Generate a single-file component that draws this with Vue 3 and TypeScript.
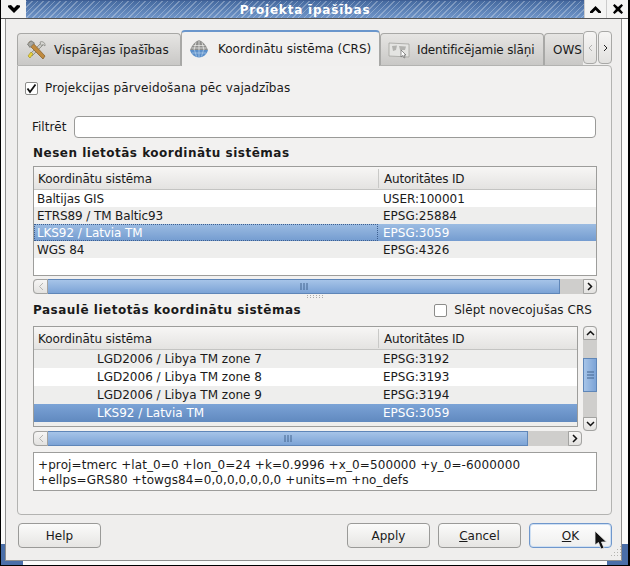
<template>
  <div class="window">
    <!-- window manager title bar -->
    <div class="titlebar">
      <div class="wm-btn menu-btn">
        <svg width="14" height="10" viewBox="0 0 14 10"><path d="M1 1.5 L4 1 L7 4 L10 1 L13 1.5 L13 3 L7 9 L1 3 Z" fill="#000" /></svg>
      </div>
      <div class="title-band"><span class="title-text">Projekta īpašības</span></div>
      <div class="wm-btn">
        <svg width="13" height="9" viewBox="0 0 13 9"><path d="M1 6.5 L6.5 1 L12 6.5 L12 8 L9.5 8 L6.5 5 L3.5 8 L1 8 Z" fill="#000" /></svg>
      </div>
      <div class="wm-btn">
        <svg width="12" height="12" viewBox="0 0 12 12"><path d="M1 2.5 L2.5 1 L6 4 L9.5 1 L11 2.5 L8 6 L11 9.5 L9.5 11 L6 8 L2.5 11 L1 9.5 L4 6 Z" fill="#000" /></svg>
      </div>
    </div>

    <div class="client">
      <div class="tabbar">
        <div class="tab tab-general">
          <svg width="22" height="22" viewBox="0 0 22 22">
            <path d="M17 3 L19 5 L7 17 L5 15 Z" fill="#c9c9c4" stroke="#85857f" stroke-width=".8" />
            <path d="M15 3 a3.5 3.5 0 0 1 5 4 l-2-1.500 -1.500 1 -1-1.500 Z" fill="#d8d8d4" stroke="#85857f" stroke-width=".7" />
            <path d="M4 3 L7 3 L20 17 L18 20 L5 7 Z" fill="#c08a3e" stroke="#7f5a26" stroke-width=".7" />
            <path d="M2.500 5 L6 1.800 L9.500 4 L5 8.500 Z" fill="#a8a8a2" stroke="#6f6f6a" stroke-width=".8" />
            <path d="M8 15 L5 19 L3 17 L6 13 Z" fill="#e9d23f" stroke="#9b8a1a" stroke-width=".6" />
          </svg>
          <span class="tab-label">Vispārējas īpašības</span>
        </div>
        <div class="tab tab-active">
          <svg width="20" height="20" viewBox="0 0 20 20">
            <path d="M1 11 C3 6 6 2.500 10 1 C14 2.500 17 6 19 11 Z" fill="#8e8e8c" />
            <path d="M1 11 H19 C18 15.500 14 18.500 10 18.500 C6 18.500 2 15.500 1 11 Z" fill="#5b8fc9" />
            <path d="M7 3.500 L5 11 M10 1.500 V11 M13 3.500 L15 11 M4.500 6.500 H15.500 M2.500 9 H17.500" stroke="#f0f0ee" stroke-width=".7" fill="none" />
            <path d="M5.500 11 L7.500 17.500 M10 11 V18.500 M14.500 11 L12.500 17.500 M3 14 H17" stroke="#b5cfea" stroke-width=".7" fill="none" />
          </svg>
          <span class="tab-label">Koordinātu sistēma (CRS)</span>
        </div>
        <div class="tab tab-layers">
          <svg width="22" height="18" viewBox="0 0 22 18">
            <path d="M1 2 L21 3 V16 L1 15 Z" fill="#e4e4e2" stroke="#a3a3a0" stroke-width=".8" />
            <path d="M4 5 L9 4.500 L8 9 L5 10 Z M11 5 L18 5.500 L17 9 L12 9 Z" fill="#b2b2af" />
            <path d="M13 9 L13 16 L14.800 14.500 L16 17 L17 16.500 L16 14 L18 14 Z" fill="#fff" stroke="#666" stroke-width=".7" />
          </svg>
          <span class="tab-label ident-label">Identificējamie slāņi</span>
        </div>
        <div class="tab tab-ows"><span class="tab-label">OWS</span></div>
        <div class="tab-scroll">
          <div class="tab-arrow">
            <svg width="5" height="8" viewBox="0 0 5 8"><path d="M4 1 L1 4 L4 7" fill="none" stroke="#b0b0ae" stroke-width="1" /></svg>
          </div>
          <div class="tab-arrow">
            <svg width="5" height="8" viewBox="0 0 5 8"><path d="M1 1 L4 4 L1 7" fill="none" stroke="#222" stroke-width="1" /></svg>
          </div>
        </div>
      </div>

      <div class="panel">
        <label class="check-row">
          <span class="checkbox">
            <svg width="11" height="11" viewBox="0 0 11 11"><path d="M1.500 5.500 L4 9 L9.500 1.500" fill="none" stroke="#111" stroke-width="1.800" /></svg>
          </span>
          <span class="wide-text">Projekcijas pārveidošana pēc vajadzības</span>
        </label>

        <div class="filter-row">
          <span class="filter-label">Filtrēt</span>
          <div class="line-edit"></div>
        </div>

        <div class="heading first-heading">Nesen lietotās koordinātu sistēmas</div>

        <div class="table recent-table">
          <div class="thead">
            <div class="th col-name">Koordinātu sistēma</div>
            <div class="th col-id">Autoritātes ID</div>
          </div>
          <div
            v-for="(row, i) in recent"
            :key="row.id"
            class="tr tr-recent"
            :class="{ alt: i % 2 === 1, selected: row.selected }"
          >
            <div class="td col-name" :class="{ focused: row.selected }">{{ row.name }}</div>
            <div class="td col-id">{{ row.id }}</div>
          </div>
        </div>

        <div class="hscroll recent-scroll">
          <div class="sb-btn left-btn">
            <svg width="6" height="9" viewBox="0 0 6 9"><path d="M5 1 L1.500 4.500 L5 8" fill="none" stroke="#b4b4b2" stroke-width="1" /></svg>
          </div>
          <div class="sb-thumb" style="width: 512px">
            <svg width="8" height="7" viewBox="0 0 8 7"><path d="M1 0 V7 M4 0 V7 M7 0 V7" stroke="#43648f" stroke-width="1" /></svg>
          </div>
          <div class="sb-trough"></div>
          <div class="sb-btn right-btn">
            <svg width="6" height="9" viewBox="0 0 6 9"><path d="M1 1 L4.500 4.500 L1 8" fill="none" stroke="#111" stroke-width="1.500" /></svg>
          </div>
        </div>

        <div class="splitter"></div>

        <div class="heading-row">
          <div class="heading">Pasaulē lietotās koordinātu sistēmas</div>
          <label class="check-row hide-row">
            <span class="checkbox"></span>
            <span class="hide-text">Slēpt novecojušas CRS</span>
          </label>
        </div>

        <div class="world-area">
          <div class="table world-table">
            <div class="thead">
              <div class="th col-name">Koordinātu sistēma</div>
              <div class="th col-id">Autoritātes ID</div>
            </div>
            <div
              v-for="(row, i) in world"
              :key="row.id"
              class="tr tr-world"
              :class="{ alt: i % 2 === 0, selected: row.selected }"
            >
              <div class="td col-name indented">{{ row.name }}</div>
              <div class="td col-id">{{ row.id }}</div>
            </div>
          </div>
          <div class="vscroll">
            <div class="vs-btn vs-up"><svg width="9" height="6" viewBox="0 0 9 6"><path d="M1 5 L4.500 1.500 L8 5" fill="none" stroke="#111" stroke-width="1.500" /></svg></div>
            <div class="vs-trough">
              <div class="vs-thumb">
                <svg width="7" height="8" viewBox="0 0 7 8"><path d="M0 1 H7 M0 4 H7 M0 7 H7" stroke="#43648f" stroke-width="1" /></svg>
              </div>
            </div>
            <div class="vs-btn vs-down"><svg width="9" height="6" viewBox="0 0 9 6"><path d="M1 1 L4.500 4.500 L8 1" fill="none" stroke="#111" stroke-width="1.500" /></svg></div>
          </div>
        </div>

        <div class="hscroll world-scroll">
          <div class="sb-btn left-btn">
            <svg width="6" height="9" viewBox="0 0 6 9"><path d="M5 1 L1.500 4.500 L5 8" fill="none" stroke="#b4b4b2" stroke-width="1" /></svg>
          </div>
          <div class="sb-thumb" style="width: 480px">
            <svg width="8" height="7" viewBox="0 0 8 7"><path d="M1 0 V7 M4 0 V7 M7 0 V7" stroke="#43648f" stroke-width="1" /></svg>
          </div>
          <div class="sb-trough"></div>
          <div class="sb-btn right-btn">
            <svg width="6" height="9" viewBox="0 0 6 9"><path d="M1 1 L4.500 4.500 L1 8" fill="none" stroke="#111" stroke-width="1.500" /></svg>
          </div>
        </div>

        <div class="proj-box">
          +proj=tmerc +lat_0=0 +lon_0=24 +k=0.9996 +x_0=500000 +y_0=-6000000<br />
          +ellps=GRS80 +towgs84=0,0,0,0,0,0,0 +units=m +no_defs
        </div>
      </div>

      <div class="buttons">
        <button class="btn">Help</button>
        <span class="spacer"></span>
        <button class="btn">Apply</button>
        <button class="btn"><u>C</u>ancel</button>
        <button class="btn btn-default"><u>O</u>K</button>
      </div>
    </div>

    <!-- overlays: corner marks, resize grip, mouse pointer -->
    <div class="corner corner-left"></div>
    <div class="corner corner-right"></div>
    <svg class="size-grip" width="12" height="12" viewBox="0 0 12 12">
      <g fill="#b4b4b0">
        <rect x="10" y="1" width="1" height="1" /><rect x="7" y="4" width="1" height="1" /><rect x="10" y="4" width="1" height="1" />
        <rect x="4" y="7" width="1" height="1" /><rect x="7" y="7" width="1" height="1" /><rect x="10" y="7" width="1" height="1" />
        <rect x="1" y="10" width="1" height="1" /><rect x="4" y="10" width="1" height="1" /><rect x="7" y="10" width="1" height="1" /><rect x="10" y="10" width="1" height="1" />
      </g>
    </svg>
    <svg class="pointer" width="14" height="21" viewBox="0 0 14 21">
      <path d="M1 1 L1 15 L4.500 12.500 L7 19 L10 18 L7.500 12 L12.500 12 Z" fill="#111" stroke="#eee" stroke-width=".8" />
    </svg>
  </div>
</template>

<script setup lang="ts">
interface CrsRow {
  name: string
  id: string
  selected?: boolean
}

const recent: CrsRow[] = [
  { name: 'Baltijas GIS', id: 'USER:100001' },
  { name: 'ETRS89 / TM Baltic93', id: 'EPSG:25884' },
  { name: 'LKS92 / Latvia TM', id: 'EPSG:3059', selected: true },
  { name: 'WGS 84', id: 'EPSG:4326' }
]

const world: CrsRow[] = [
  { name: 'LGD2006 / Libya TM zone 7', id: 'EPSG:3192' },
  { name: 'LGD2006 / Libya TM zone 8', id: 'EPSG:3193' },
  { name: 'LGD2006 / Libya TM zone 9', id: 'EPSG:3194' },
  { name: 'LKS92 / Latvia TM', id: 'EPSG:3059', selected: true },
  { name: 'LKS94 / Lithuania TM', id: 'EPSG:3346' }
]
</script>

<style>
html,
body {
  margin: 0;
  background: #fff;
}
</style>

<style scoped>
.window {
  position: relative;
  width: 630px;
  height: 566px;
  box-sizing: border-box;
  overflow: hidden;
  display: flex;
  flex-direction: column;
  background: #fbfbfa;
  border-left: 1px solid #000;
  border-right: 2px solid #000;
  border-bottom: 1px solid #000;
  font-family: "DejaVu Sans", sans-serif;
  font-size: 12px;
  color: #1a1a1a;
}

.titlebar {
  height: 19px;
  flex: none;
  display: flex;
  border-bottom: 1px solid #555;
  box-sizing: border-box;
}

.wm-btn {
  width: 21px;
  display: flex;
  align-items: center;
  justify-content: center;
  background: #f4f4f3;
  border-left: 1px solid #ccc;
}

.menu-btn {
  width: 25px;
  border-left: none;
}

.title-band {
  flex: 1;
  display: flex;
  align-items: center;
  justify-content: center;
  border-top: 1px solid #3f5f95;
  background:
    repeating-linear-gradient(135deg, rgba(255, 255, 255, 0.28) 0 1px, transparent 1px 4px),
    linear-gradient(#45699f, #7096c9);
}

.title-text {
  color: #fff;
  font-weight: bold;
  letter-spacing: 0.8px;
  line-height: 16px;
}

.client {
  flex: 1;
  min-height: 0;
  display: flex;
  flex-direction: column;
  margin: 0 6px 4px 4px;
  padding: 11px 9px 0 11px;
  background: #efeeed;
  border-left: 1px solid #8f8f8f;
  border-right: 1px solid #8f8f8f;
  border-bottom: 1px solid #8f8f8f;
}

.tabbar {
  height: 36px;
  flex: none;
  display: flex;
  align-items: flex-end;
  position: relative;
  z-index: 1;
  overflow: hidden;
}

.tab {
  box-sizing: border-box;
  height: 32px;
  margin-bottom: 1px;
  display: flex;
  align-items: center;
  flex: none;
  background: linear-gradient(#e6e5e3, #c9c8c6);
  border: 1px solid #a8a8a6;
  border-bottom: none;
  border-radius: 4px 4px 0 0;
  white-space: nowrap;
  overflow: hidden;
}

.tab-general {
  width: 164px;
  padding-left: 7px;
  gap: 7px;
}

.tab-active {
  width: 199px;
  height: 36px;
  margin-bottom: 0;
  padding-left: 7px;
  gap: 9px;
  background: #f1f0ef;
  border-color: #a8a8a6;
  border-top: 2px solid #6a96cc;
}

.tab-layers {
  width: 164px;
  padding-left: 7px;
  gap: 7px;
}

.ident-label {
  letter-spacing: -0.15px;
}

.tab-ows {
  width: 60px;
  padding-left: 8px;
}

.tab-scroll {
  position: absolute;
  right: 0;
  top: 1px;
  height: 34px;
  display: flex;
  gap: 1px;
  background: #efeeed;
}

.tab-arrow {
  box-sizing: border-box;
  width: 14px;
  height: 33px;
  display: flex;
  align-items: center;
  justify-content: center;
  background: linear-gradient(#f6f5f4, #e2e1df);
  border: 1px solid #a8a8a6;
  border-radius: 4px;
}

.panel {
  box-sizing: border-box;
  height: 450px;
  flex: none;
  margin-top: -1px;
  padding: 15px 14px 0 15px;
  background: #f2f1f0;
  border: 1px solid #b3b3b1;
  border-radius: 0 4px 4px 4px;
}

.check-row {
  display: flex;
  align-items: center;
  gap: 7px;
  height: 14px;
  margin-left: -8px;
}

.wide-text {
  letter-spacing: 0.1px;
}

.hide-text {
  letter-spacing: 0.05px;
}

.checkbox {
  box-sizing: border-box;
  width: 13px;
  height: 13px;
  flex: none;
  display: flex;
  align-items: center;
  justify-content: center;
  background: #fff;
  border: 1px solid #8c8c8a;
  border-radius: 2px;
}

.filter-row {
  display: flex;
  align-items: center;
  margin-top: 21px;
  height: 22px;
}

.filter-label {
  width: 42px;
  margin-left: -1px;
}

.line-edit {
  flex: 1;
  height: 22px;
  margin-right: 1px;
  box-sizing: border-box;
  background: #fff;
  border: 1px solid #9a9a98;
  border-radius: 4px;
}

.heading {
  font-weight: bold;
  letter-spacing: 0.5px;
  line-height: 16px;
}

.first-heading {
  margin-top: 7px;
}

.table {
  box-sizing: border-box;
  background: #fff;
  border: 1px solid #9d9d9b;
  overflow: hidden;
}

.recent-table {
  height: 110px;
  margin-top: 5px;
}

.thead {
  height: 23px;
  display: flex;
  align-items: center;
  background: linear-gradient(#f7f6f5, #e4e3e1);
  border-bottom: 1px solid #c4c4c2;
  box-sizing: border-box;
}

.th {
  padding-top: 2px;
  line-height: 17px;
  letter-spacing: -0.1px;
}

.th.col-id {
  border-left: 1px solid #c9c9c7;
  padding-left: 5px;
  letter-spacing: -0.2px;
}

.th.col-name {
  padding-left: 4px;
}

.col-name {
  width: 344px;
  flex: none;
  box-sizing: border-box;
}

.tr {
  display: flex;
  align-items: center;
}

.tr-recent {
  height: 17px;
}

.tr-recent .col-name {
  letter-spacing: -0.1px;
}

.tr-world {
  height: 18px;
}

.tr-world:last-child .td {
  padding-top: 2px;
}

.alt {
  background: #eeeeed;
}

.selected {
  background: linear-gradient(#9cbce2, #749cd0);
  color: #fff;
}

.world-table .selected {
  background: linear-gradient(#7ba3d6, #6089bf);
}

.td {
  height: 100%;
  padding-top: 1px;
  line-height: 17px;
  box-sizing: border-box;
}

.td.col-name {
  padding-left: 3px;
}

.td.col-id {
  padding-left: 5px;
}

.td.focused {
  border: 1px dotted #3d5f8f;
  padding-top: 0;
  padding-left: 2px;
  line-height: 17px;
}

.td.indented {
  padding-left: 63px;
}

.hscroll {
  height: 15px;
  box-sizing: border-box;
  display: flex;
  background: #cfcecc;
  border-radius: 4px;
}

.recent-scroll {
  margin-top: 3px;
}

.world-scroll {
  width: 549px;
  margin-top: 0;
}

.sb-btn {
  flex: none;
  box-sizing: border-box;
  display: flex;
  align-items: center;
  justify-content: center;
  background: linear-gradient(#f6f5f4, #e3e2e0);
  border: 1px solid #a3a3a1;
}

.left-btn {
  width: 15px;
  border-radius: 4px 0 0 4px;
}

.right-btn {
  width: 14px;
  border-radius: 0 4px 4px 0;
}

.sb-thumb {
  flex: none;
  display: flex;
  align-items: center;
  justify-content: center;
  box-sizing: border-box;
  background: linear-gradient(#a6c4e8, #7ca3d6);
  border: 1px solid #5f86b8;
  border-width: 1px 1px 1px 0;
}

.sb-trough {
  flex: 1;
}

.splitter {
  width: 16px;
  height: 3px;
  margin: 1px auto 0;
  background-image: radial-gradient(circle at 0.5px 0.5px, #aaa 0.6px, transparent 0.7px);
  background-size: 3px 2px;
}

.heading-row {
  display: flex;
  align-items: center;
  justify-content: space-between;
  margin-top: 4px;
  height: 16px;
}

.hide-row {
  margin-left: 0;
  margin-right: 5px;
}

.world-area {
  display: flex;
  gap: 5px;
  margin-top: 8px;
  height: 105px;
}

.world-table {
  width: 545px;
  height: 101px;
  flex: none;
}

.vscroll {
  width: 14px;
  display: flex;
  flex-direction: column;
  background: #cfcecc;
  border-radius: 4px;
}

.vs-btn {
  height: 14px;
  flex: none;
  box-sizing: border-box;
  display: flex;
  align-items: center;
  justify-content: center;
  background: linear-gradient(#f6f5f4, #e3e2e0);
  border: 1px solid #a3a3a1;
}

.vs-up {
  border-radius: 4px 4px 0 0;
}

.vs-down {
  border-radius: 0 0 4px 4px;
}

.vs-trough {
  flex: 1;
  padding-top: 18px;
}

.vs-thumb {
  height: 34px;
  box-sizing: border-box;
  display: flex;
  align-items: center;
  justify-content: center;
  background: linear-gradient(90deg, #a6c4e8, #7ca3d6);
  border: 1px solid #5f86b8;
}

.proj-box {
  box-sizing: border-box;
  height: 39px;
  margin-top: 6px;
  padding: 5px 4px;
  line-height: 15px;
  letter-spacing: 0.1px;
  background: #fff;
  border: 1px solid #9d9d9b;
  white-space: nowrap;
}

.buttons {
  display: flex;
  gap: 8px;
  margin-top: 8px;
  padding-left: 1px;
}

.spacer {
  flex: 1;
}

.btn {
  box-sizing: border-box;
  width: 83px;
  height: 25px;
  padding: 0;
  font: inherit;
  color: #1a1a1a;
  background: linear-gradient(#fbfbfa, #e6e5e3);
  border: 1px solid #9a9a98;
  border-radius: 4px;
}

.btn-default {
  background: linear-gradient(#fdfdfd, #efefee);
  border-color: #6f97cc;
  box-shadow: inset 0 0 0 1px #cfe0f3;
}

.corner {
  position: absolute;
  background: #4a6ea8;
}

.corner-left {
  left: 0;
  bottom: 0;
  width: 4px;
  height: 21px;
}

.corner-left::after {
  content: "";
  position: absolute;
  left: 0;
  bottom: 0;
  width: 22px;
  height: 4px;
  background: #4a6ea8;
}

.corner-right {
  right: 0;
  bottom: 0;
  width: 6px;
  height: 21px;
}

.corner-right::after {
  content: "";
  position: absolute;
  right: 0;
  bottom: 0;
  width: 21px;
  height: 4px;
  background: #4a6ea8;
}

.size-grip {
  position: absolute;
  left: 609px;
  top: 545px;
}

.pointer {
  position: absolute;
  left: 593px;
  top: 530px;
}
</style>
